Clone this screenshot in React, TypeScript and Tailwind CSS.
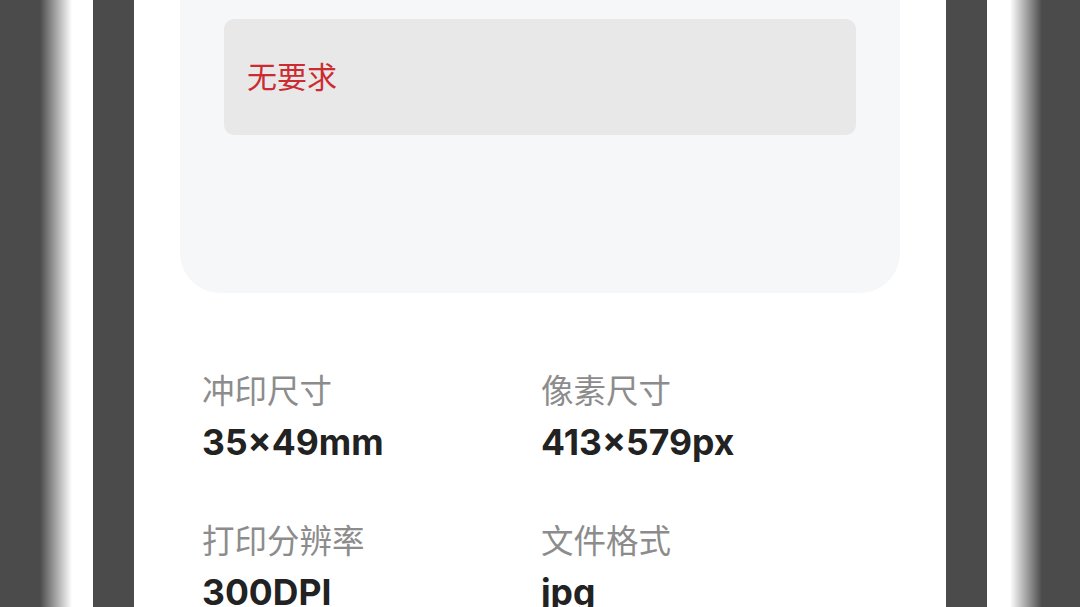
export default function App() {
  const specs = [
    { label: "冲印尺寸", value: "35×49mm" },
    { label: "像素尺寸", value: "413×579px" },
    { label: "打印分辨率", value: "300DPI" },
    { label: "文件格式", value: "jpg" },
  ];

  return (
    <div className="w-[1080px] h-[607px] flex overflow-hidden bg-[#4b4b4b]">
      <div className="w-[93px] h-full bg-[linear-gradient(to_right,#4b4b4b_40px,#ffffff_72px)]" />
      <div className="w-[41px] h-full bg-[#4b4b4b]" />
      <div className="w-[812px] h-full bg-white px-[46px] flex flex-col" style={{ fontFamily: '"Noto Sans CJK SC", "Noto Sans", sans-serif' }}>
        <div className="h-[293px] shrink-0 bg-[#f6f7f9] rounded-b-[40px] pt-[19px] px-[44px]">
          <div className="h-[116px] rounded-[10px] bg-[#e8e8e8] flex items-center pl-[23px] pb-[4px]">
            <span className="text-[30px] leading-none text-[#cc2b31]">无要求</span>
          </div>
        </div>
        <div className="grid grid-cols-[339px_1fr] pl-[22px] pt-[76px] gap-y-[52px]">
          {specs.map((s) => (
            <div key={s.label} className="flex flex-col gap-[10px]">
              <div className="text-[32.5px] leading-[40px] text-[#8c8c8c]">{s.label}</div>
              <div className="text-[35.5px] leading-[48px] font-bold text-[#222222]" style={{ fontFamily: 'Inter, "Noto Sans", sans-serif' }}>
                {s.value}
              </div>
            </div>
          ))}
        </div>
      </div>
      <div className="w-[41px] h-full bg-[#4b4b4b]" />
      <div className="w-[93px] h-full bg-[linear-gradient(to_right,#ffffff_23px,#4b4b4b_55px)]" />
    </div>
  );
}
